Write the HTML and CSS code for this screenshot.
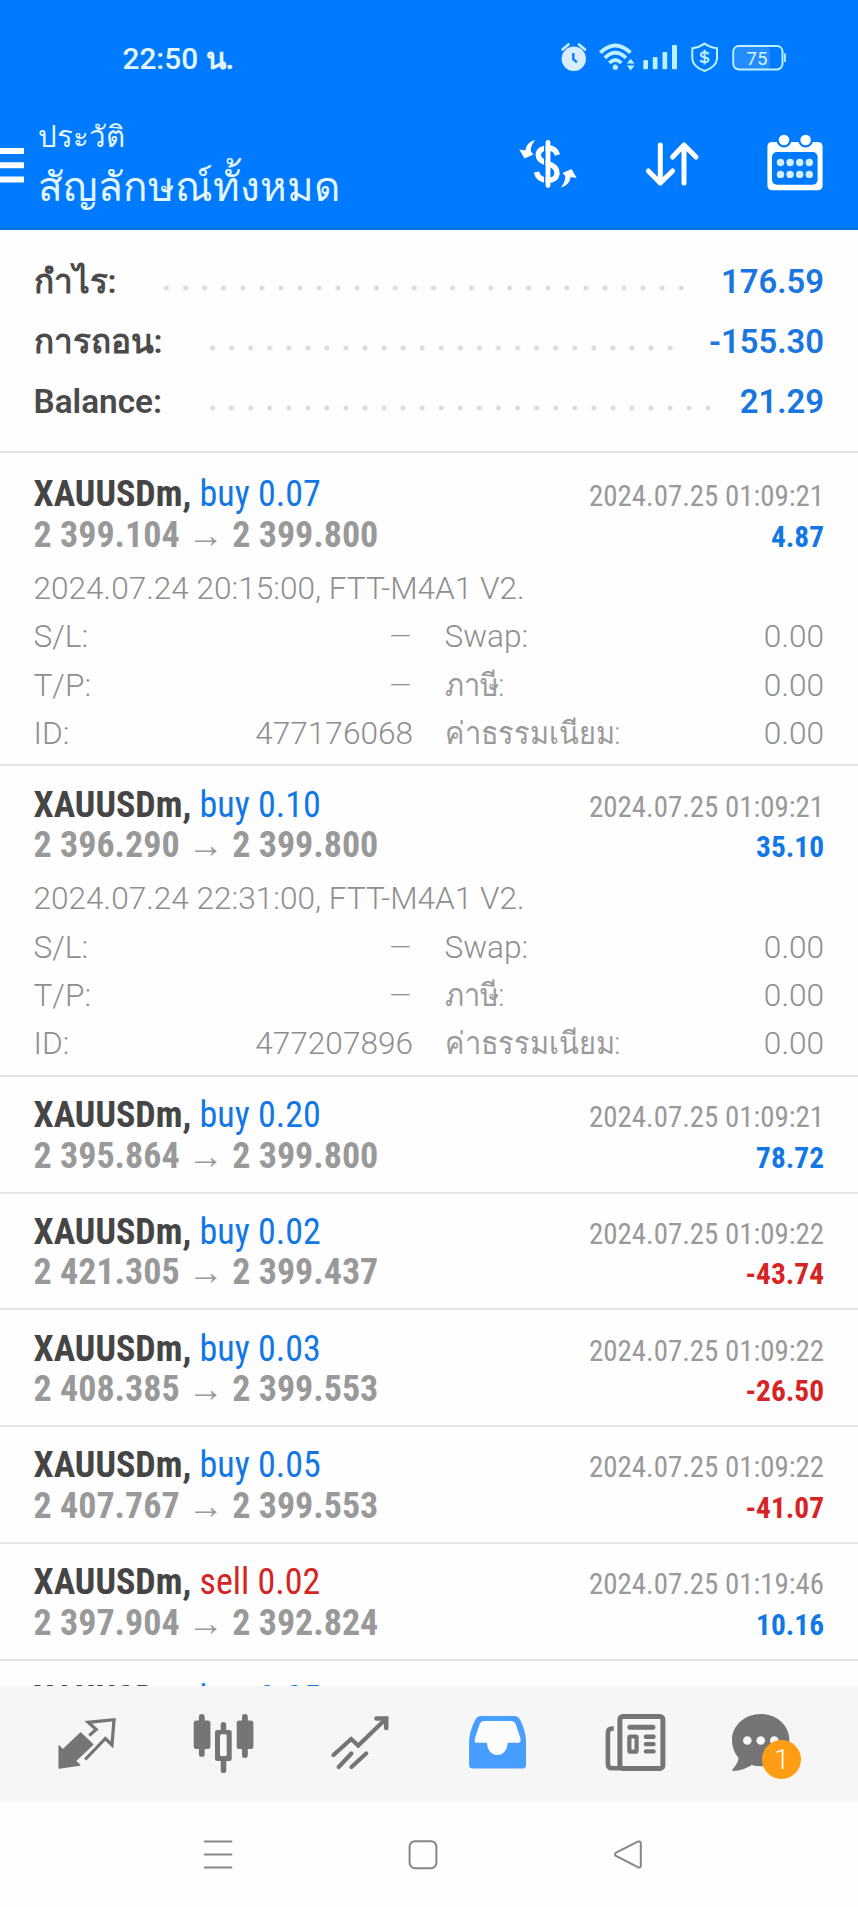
FILE: index.html
```
<!DOCTYPE html>
<html lang="th">
<head>
<meta charset="utf-8">
<title>ประวัติ</title>
<link rel="stylesheet" href="styles.css">
</head>
<body>
<div class="screen">
  <header class="header">
    <div class="status">
      <span class="clock">22:50 <b>น.</b></span>
      <svg class="status-icons" viewBox="556 36 236 44">
        <g class="alarm">
          <circle cx="573.8" cy="58.8" r="12.2" fill="#d8ecff"/>
          <path d="M562.5 49.5l6-5M585 49.5l-6-5" stroke="#c8f0ff" stroke-width="2.6" stroke-linecap="round"/>
          <path d="M573.3 53v6l3.6 3.4" fill="none" stroke="#0a7aff" stroke-width="2.4"/>
        </g>
        <g fill="none" stroke="#bdf0ff" stroke-width="3.8">
          <path d="M600.3 52.6Q615.3 38.2 630.5 52.6"/>
          <path d="M604.8 57.8Q615.3 47.6 626 57.8"/>
          <path d="M609.3 63Q615.3 57 621.3 63"/>
        </g>
        <g fill="#bdf0ff">
          <circle cx="615.3" cy="67.2" r="2.6"/>
          <path d="M626.8 63.6l3.9-4.8 3.9 4.8zM626.8 65.6l3.9 4.8 3.9-4.8z"/>
          <rect x="643.3" y="60" width="4.7" height="9.3" rx="1"/>
          <rect x="652.8" y="57" width="4.7" height="12.3" rx="1"/>
          <rect x="662.5" y="52" width="4.7" height="17.3" rx="1"/>
          <rect x="672" y="45" width="5" height="24.3" rx="1"/>
        </g>
        <path d="M704.6 43.6C700.5 46.5 696.5 47.8 692.3 48.2V58.5C692.5 64.5 697.5 68.5 704.6 71C711.7 68.5 716.8 64.5 717 58.5V48.2C712.8 47.8 708.7 46.5 704.6 43.6Z" fill="none" stroke="#bdf0ff" stroke-width="2"/>
        <path d="M708.8 54.2Q707.5 52.2 704.6 52.2Q700.9 52.3 700.9 54.7Q701 56.8 704.6 57.2Q708.6 57.8 708.6 60Q708.4 62.2 704.6 62.2Q701.5 62.2 700.3 60M704.6 49.7V64.5" fill="none" stroke="#bdf0ff" stroke-width="2"/>
        <rect x="735" y="47" width="35" height="22" rx="4" fill="#fff" opacity=".14"/>
        <rect x="733.3" y="46" width="49.2" height="23.4" rx="5.5" fill="none" stroke="#bdf0ff" stroke-width="2"/>
        <path d="M785 53.5V62" stroke="#bdf0ff" stroke-width="1.8"/>
        <text class="battery" x="757" y="64.7" text-anchor="middle">75</text>
      </svg>
    </div>
    <div class="toolbar">
      <svg class="menu" viewBox="0 134 24 60" fill="#fff"><path d="M0 148h24v6H0zM0 162.3h24v6H0zM0 176.6h24v6H0z"/></svg>
      <div class="titles">
        <div class="subtitle">ประวัติ</div>
        <h1 class="title">สัญลักษณ์ทั้งหมด</h1>
      </div>
      <svg class="action" viewBox="518 134 60 60">
        <path d="M557.5 155C556 149.5 552.5 148 548 148C541.5 148 538.3 151 538.3 155C538.3 160 543 162 548 163.5C554 165.5 557 168 557 173C557 178 553 180.2 548 180.2C541 180.2 537.5 177.5 536.5 172" fill="none" stroke="#fff" stroke-width="5.4"/>
        <path d="M544.8 140V188" stroke="#007aff" stroke-width="1.6"/>
        <path d="M548 142.3V185.5" stroke="#fff" stroke-width="4.8" stroke-linecap="round"/>
        <g fill="#fff">
          <path id="turn" d="M535.3 140C529 141.5 525.8 145.5 525.5 150.5L519.3 149.5L524.5 158.5L533.5 154.5L530.8 151.5C530.5 147 532.5 143 535.3 140Z"/>
          <use href="#turn" transform="rotate(180 548 163.7)"/>
        </g>
      </svg>
      <svg class="action" viewBox="642 134 60 60" fill="none" stroke="#fff" stroke-width="5" stroke-linecap="round" stroke-linejoin="round">
        <path d="M660.3 145V183M648.4 171L660.3 183L672.6 171M684 183V145M672.6 157L684 145L696 157"/>
      </svg>
      <svg class="action" viewBox="765 134 60 60">
        <rect x="767.4" y="142" width="55.2" height="48.3" rx="4.5" fill="#fff"/>
        <rect x="772" y="152" width="45.6" height="32.8" rx="5" fill="#007aff"/>
        <g fill="#fff" stroke="#007aff" stroke-width="2.2"><circle cx="784" cy="140" r="6.4"/><circle cx="805.6" cy="140" r="6.4"/></g>
        <g fill="#d4f0ff">
          <circle cx="780.5" cy="162.5" r="3.7"/><circle cx="790.1" cy="162.5" r="3.7"/><circle cx="799.7" cy="162.5" r="3.7"/><circle cx="809.3" cy="162.5" r="3.7"/>
          <circle cx="780.5" cy="174.4" r="3.7"/><circle cx="790.1" cy="174.4" r="3.7"/><circle cx="799.7" cy="174.4" r="3.7"/><circle cx="809.3" cy="174.4" r="3.7"/>
        </g>
      </svg>
    </div>
  </header>

  <main class="content">
    <section class="summary">
      <div class="sum-row"><span>กำไร:</span><i class="leader" style="--dots:28"></i><b>176.59</b></div>
      <div class="sum-row"><span>การถอน:</span><i class="leader" style="--dots:25"></i><b>-155.30</b></div>
      <div class="sum-row"><span>Balance:</span><i class="leader" style="--dots:27"></i><b>21.29</b></div>
    </section>
    <section class="deals">
      <article class="deal">
        <div class="line"><span class="name"><b>XAUUSDm,</b> <span class="up">buy 0.07</span></span><time>2024.07.25 01:09:21</time></div>
        <div class="line"><span class="prices">2 399.104 → 2 399.800</span><span class="profit up">4.87</span></div>
        <div class="details">
          <div class="comment">2024.07.24 20:15:00, FTT-M4A1 V2.</div>
          <div class="cell"><span>S/L:</span><span class="none">—</span></div><div class="cell"><span>Swap:</span><span>0.00</span></div>
          <div class="cell"><span>T/P:</span><span class="none">—</span></div><div class="cell"><span class="thai">ภาษี:</span><span>0.00</span></div>
          <div class="cell"><span>ID:</span><span>477176068</span></div><div class="cell"><span class="thai">ค่าธรรมเนียม:</span><span>0.00</span></div>
        </div>
      </article>
      <article class="deal">
        <div class="line"><span class="name"><b>XAUUSDm,</b> <span class="up">buy 0.10</span></span><time>2024.07.25 01:09:21</time></div>
        <div class="line"><span class="prices">2 396.290 → 2 399.800</span><span class="profit up">35.10</span></div>
        <div class="details">
          <div class="comment">2024.07.24 22:31:00, FTT-M4A1 V2.</div>
          <div class="cell"><span>S/L:</span><span class="none">—</span></div><div class="cell"><span>Swap:</span><span>0.00</span></div>
          <div class="cell"><span>T/P:</span><span class="none">—</span></div><div class="cell"><span class="thai">ภาษี:</span><span>0.00</span></div>
          <div class="cell"><span>ID:</span><span>477207896</span></div><div class="cell"><span class="thai">ค่าธรรมเนียม:</span><span>0.00</span></div>
        </div>
      </article>
      <article class="deal">
        <div class="line"><span class="name"><b>XAUUSDm,</b> <span class="up">buy 0.20</span></span><time>2024.07.25 01:09:21</time></div>
        <div class="line"><span class="prices">2 395.864 → 2 399.800</span><span class="profit up">78.72</span></div>
      </article>
      <article class="deal">
        <div class="line"><span class="name"><b>XAUUSDm,</b> <span class="up">buy 0.02</span></span><time>2024.07.25 01:09:22</time></div>
        <div class="line"><span class="prices">2 421.305 → 2 399.437</span><span class="profit down">-43.74</span></div>
      </article>
      <article class="deal">
        <div class="line"><span class="name"><b>XAUUSDm,</b> <span class="up">buy 0.03</span></span><time>2024.07.25 01:09:22</time></div>
        <div class="line"><span class="prices">2 408.385 → 2 399.553</span><span class="profit down">-26.50</span></div>
      </article>
      <article class="deal">
        <div class="line"><span class="name"><b>XAUUSDm,</b> <span class="up">buy 0.05</span></span><time>2024.07.25 01:09:22</time></div>
        <div class="line"><span class="prices">2 407.767 → 2 399.553</span><span class="profit down">-41.07</span></div>
      </article>
      <article class="deal">
        <div class="line"><span class="name"><b>XAUUSDm,</b> <span class="down">sell 0.02</span></span><time>2024.07.25 01:19:46</time></div>
        <div class="line"><span class="prices">2 397.904 → 2 392.824</span><span class="profit up">10.16</span></div>
      </article>
      <article class="deal">
        <div class="line"><span class="name"><b>XAUUSDm,</b> <span class="up">buy 0.05</span></span></div>
      </article>
    </section>
  </main>

  <nav class="tabs">
    <svg viewBox="42.3 1686 90 116">
      <path d="M59.5 1746L63 1750L81 1733L93 1744.5L75.5 1761L80 1765L59.5 1768Z" fill="#757575" stroke="#757575" stroke-width="1.5" stroke-linejoin="round"/>
      <path d="M89.5 1735.5L96.5 1729.5L88.5 1722.3L114.3 1719.7L112.3 1745L105.7 1738.5L85.5 1759.5" fill="none" stroke="#757575" stroke-width="3.2"/>
    </svg>
    <svg viewBox="179.3 1686 90 116" fill="#757575">
      <rect x="194" y="1720.5" width="16.7" height="28.5" rx="2.8"/><rect x="199.2" y="1714" width="5.8" height="42.8" rx="2.9"/>
      <rect x="237" y="1720.5" width="16.7" height="28.5" rx="2.8"/><rect x="242.3" y="1714" width="5.8" height="44" rx="2.9"/>
      <rect x="221" y="1722" width="5.6" height="51" rx="2.8"/><rect x="215.3" y="1730" width="16.7" height="31" rx="2.5"/>
      <rect x="220.3" y="1734.3" width="6.7" height="21.7" rx="1.5" fill="#f6f6f6"/>
    </svg>
    <svg viewBox="316.3 1686 90 116" fill="none" stroke="#757575" stroke-width="4.2" stroke-linecap="round">
      <path d="M333.8 1755L351.5 1739L358.5 1745.5L386 1719M339 1767L351.7 1753.5M351.8 1767L366.5 1753.5"/>
      <path d="M376.8 1718.5H386.5V1728" stroke-width="4.6"/>
    </svg>
    <svg viewBox="453.3 1686 90 116">
      <path d="M481 1716H515Q518.5 1716 520.5 1720C523.5 1726 526.3 1734 526.3 1742V1765Q526.3 1768.6 522.7 1768.6H473Q469.4 1768.6 469.4 1765V1742C469.4 1734 472.5 1726 475.5 1720Q477.5 1716 481 1716Z" fill="#479eff"/>
      <path d="M484.5 1721H511.5Q514.5 1721 516 1724L520.7 1738Q521.5 1742.7 519 1742.7H508.5Q507.8 1742.7 507.8 1744A10.2 11 0 0 1 487.4 1744Q487.4 1742.7 486.5 1742.7H476.5Q474.3 1742.7 475.3 1738L480 1724Q481.5 1721 484.5 1721Z" fill="#fcfcfc"/>
    </svg>
    <svg viewBox="590.3 1686 90 116">
      <path d="M614 1728.5H612.5Q608.2 1728.5 608.2 1733V1764Q608.2 1768.3 612.5 1768.3H622" fill="none" stroke="#757575" stroke-width="4.6"/>
      <rect x="620.2" y="1716.5" width="43" height="51.9" rx="3" fill="none" stroke="#757575" stroke-width="5"/>
      <g fill="#757575"><rect x="627.7" y="1724.8" width="28" height="5" rx="2.5"/><rect x="644" y="1734.6" width="12" height="4.4" rx="2.2"/><rect x="644" y="1741.9" width="12" height="4.4" rx="2.2"/><rect x="644" y="1749.2" width="12" height="4.4" rx="2.2"/></g>
      <rect x="629.7" y="1736.5" width="7.2" height="15.2" rx="1" fill="none" stroke="#757575" stroke-width="4.2"/>
    </svg>
    <div class="chat">
      <svg viewBox="727.3 1686 90 116">
        <path d="M761 1714C777 1714 789.7 1725.5 789.7 1740C789.7 1755 777 1766.3 761 1766.3Q756 1766.3 752 1765Q744 1770.5 733.5 1771Q732 1770.6 733 1769.2Q738.5 1763 738.8 1758Q732.3 1750 732.3 1740C732.3 1725.5 745 1714 761 1714Z" fill="#757575"/>
        <g fill="#f8f8f8"><circle cx="747.6" cy="1740.5" r="4.3"/><circle cx="761" cy="1740.5" r="4.3"/><circle cx="774.6" cy="1740.5" r="4.3"/></g>
      </svg>
      <span class="badge">1</span>
    </div>
  </nav>

  <footer class="sysnav">
    <svg viewBox="197.8 1834 40 40"><path d="M203.8 1841.5H232M203.8 1854.5H232M203.8 1867.5H232"/></svg>
    <svg viewBox="402.7 1834 40 40"><rect x="409.3" y="1841.2" width="26.8" height="27" rx="5.5"/></svg>
    <svg viewBox="607.5 1834 40 40"><path d="M615.5 1852.7L637.3 1841.7Q640.3 1840.6 640.3 1843.5V1865.5Q640.3 1868.3 637.3 1867.2L615.5 1856Q613.5 1854.3 615.5 1852.7Z"/></svg>
  </footer>
</div>
</body>
</html>
```
FILE: styles.css
```
* { box-sizing: border-box; }

body {
  margin: 0;
  background: #fefefe;
  color: #999;
  font-family: Roboto, sans-serif;
}

svg { display: block; flex: none; }

.screen {
  display: flex;
  flex-direction: column;
  width: 858px;
  height: 1907px;
  overflow: hidden;
}

/* Header */
.header {
  flex: none;
  height: 230px;
  background: #007aff;
  border-bottom: 1px solid #1465d6;
  color: #e4f6ff;
}

.status {
  display: flex;
  justify-content: space-between;
  height: 120px;
  padding: 36px 66px 0 122.5px;
}

.clock {
  font-size: 29.8px;
  font-weight: 500;
  line-height: 46px;
}

.status-icons { width: 236px; height: 44px; }

.battery {
  fill: #d4f4ff;
  font-size: 18.7px;
}

.toolbar {
  display: flex;
  padding-right: 33px;
}

.menu { width: 24px; height: 60px; margin-top: 14px; }

.titles { flex: 1; padding-left: 14px; }

.subtitle { font-size: 29.4px; line-height: 34px; }

.title {
  margin: 6px 0 0;
  font-size: 40.5px;
  font-weight: 400;
  line-height: 54px;
  white-space: nowrap;
}

.action { width: 60px; height: 60px; margin-top: 14px; }
.action + .action { margin-left: 63.5px; }

/* Content */
.content {
  flex: none;
  height: 1456px;
  overflow: hidden;
}

.summary {
  padding: 21.5px 34px 18.8px 33.5px;
  border-bottom: 2px solid #e4e4e4;
}

.sum-row {
  display: flex;
  height: 60.4px;
  color: #4a4a4a;
  font-size: 33.3px;
  font-weight: 600;
  line-height: 60.4px;
}

.sum-row b {
  margin-left: auto;
  color: #1976e0;
  font-size: 32.8px;
  font-weight: 600;
}

.leader {
  width: calc(19.07px * var(--dots));
  height: 6px;
  margin: 33px 0 0 40.5px;
  background: radial-gradient(circle, #dcdcdc 2px, transparent 3px) 0 0 / 19.07px 6px repeat-x;
}

.deals { padding-top: 2.3px; }

.deal {
  padding: 18.2px 34px 15.4px 33.5px;
  border-bottom: 2px solid #e4e4e4;
}

.deal:has(.details) { padding-bottom: 6.2px; }

.line {
  display: flex;
  justify-content: space-between;
  align-items: baseline;
  height: 40.6px;
  font-family: "Roboto Condensed", Roboto, sans-serif;
  font-size: 36px;
  line-height: 40.6px;
  white-space: nowrap;
}

.name b { color: #454545; font-weight: 700; }
.prices { font-weight: 700; }
.line time { font-size: 28.9px; }
.profit { font-size: 29.4px; font-weight: 700; }
.up { color: #1277e6; }
.down { color: #d62424; }

.details {
  display: grid;
  grid-template-columns: 379.5px 379.5px;
  justify-content: space-between;
  margin-top: 9.8px;
  font-size: 31.6px;
  font-weight: 340;
  line-height: 48.3px;
  color: #8e8e8e;
}

.comment { grid-column: 1 / -1; }

.cell {
  display: flex;
  justify-content: space-between;
  height: 48.3px;
  white-space: nowrap;
}

.none { padding-right: 2px; font-size: 28px; }

.thai {
  color: #9a9a9a;
  font-size: 31px;
  transform: scaleX(.935);
  transform-origin: left;
}

/* App tabs */
.tabs {
  flex: none;
  display: grid;
  grid-template-columns: repeat(6, 137px);
  justify-items: center;
  height: 116px;
  padding-left: 18.8px;
  background: #f6f6f6;
}

.tabs svg { width: 90px; height: 116px; }

.chat { position: relative; }

.badge {
  position: absolute;
  left: 35px;
  top: 54px;
  width: 39px;
  height: 39px;
  border-radius: 50%;
  background: #ff9d14;
  color: #fff;
  font-size: 28px;
  font-weight: 300;
  line-height: 39px;
  text-align: center;
}

/* System navigation */
.sysnav {
  flex: none;
  display: grid;
  grid-template-columns: repeat(3, 204.9px);
  justify-items: center;
  height: 105px;
  padding: 32px 0 0 115.3px;
}

.sysnav svg {
  width: 40px;
  height: 40px;
  fill: none;
  stroke: #858585;
  stroke-width: 2;
}
```
